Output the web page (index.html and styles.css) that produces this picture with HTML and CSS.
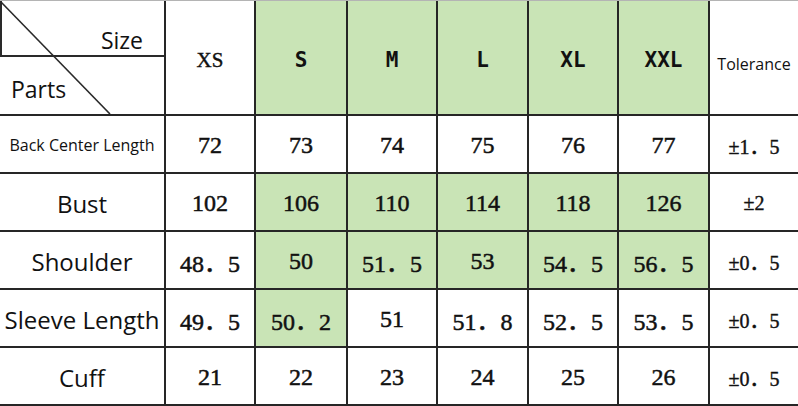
FILE: index.html
```html
<!DOCTYPE html>
<html>
<head>
<meta charset="utf-8">
<link rel="stylesheet" href="styles.css">
</head>
<body>
<div class="sheet">
  <div class="cell corner">
    <svg class="diag" width="164" height="113" viewBox="0 0 164 113"><line x1="1" y1="1" x2="110" y2="113" stroke="#2a2a2a" stroke-width="1.6"/></svg>
    <div class="corner-top"><span class="lbl-size">Size</span></div>
    <div class="corner-bot"><span class="lbl-parts">Parts</span></div>
  </div>
  <div class="cell hd-serif">XS</div>
  <div class="cell hd green">S</div>
  <div class="cell hd green">M</div>
  <div class="cell hd green">L</div>
  <div class="cell hd green">XL</div>
  <div class="cell hd green">XXL</div>
  <div class="cell tol-hd">Tolerance</div>

  <div class="cell part small">Back Center Length</div>
  <div class="cell num">72</div>
  <div class="cell num">73</div>
  <div class="cell num">74</div>
  <div class="cell num">75</div>
  <div class="cell num">76</div>
  <div class="cell num">77</div>
  <div class="cell tol">±1．5</div>

  <div class="cell part">Bust</div>
  <div class="cell num">102</div>
  <div class="cell num green">106</div>
  <div class="cell num green">110</div>
  <div class="cell num green">114</div>
  <div class="cell num green">118</div>
  <div class="cell num green">126</div>
  <div class="cell tol">±2</div>

  <div class="cell part">Shoulder</div>
  <div class="cell num">48．5</div>
  <div class="cell num green">50</div>
  <div class="cell num green">51．5</div>
  <div class="cell num green">53</div>
  <div class="cell num green">54．5</div>
  <div class="cell num green">56．5</div>
  <div class="cell tol">±0．5</div>

  <div class="cell part">Sleeve Length</div>
  <div class="cell num">49．5</div>
  <div class="cell num green">50．2</div>
  <div class="cell num">51</div>
  <div class="cell num">51．8</div>
  <div class="cell num">52．5</div>
  <div class="cell num">53．5</div>
  <div class="cell tol">±0．5</div>

  <div class="cell part">Cuff</div>
  <div class="cell num">21</div>
  <div class="cell num">22</div>
  <div class="cell num">23</div>
  <div class="cell num">24</div>
  <div class="cell num">25</div>
  <div class="cell num">26</div>
  <div class="cell tol">±0．5</div>
</div>
</body>
</html>
```

FILE: styles.css
```css
html, body {
  margin: 0;
  padding: 0;
  background: #ffffff;
}

.sheet {
  width: 798px;
  display: grid;
  grid-template-columns: 164px 88px 90px 88px 89px 88px 89px 88px;
  grid-template-rows: 113px 56px 56px 56px 56px 56px;
  gap: 2px;
  background: #262626;
  border-top: 1px solid #b4b4b4;
  border-bottom: 2px solid #262626;
}

.cell {
  background: #ffffff;
  display: flex;
  align-items: center;
  justify-content: center;
  color: #111111;
  white-space: nowrap;
}

.green {
  background: #c9e4b6;
}

.corner {
  position: relative;
  display: flex;
  flex-direction: column;
  align-items: stretch;
  justify-content: flex-start;
  font-family: "Open Sans", "Noto Sans", sans-serif;
  font-size: 23px;
}

.corner-top {
  height: 56px;
  border-bottom: 2px solid #2a2a2a;
  display: flex;
  align-items: flex-end;
  justify-content: flex-end;
  padding-right: 21px;
  box-sizing: border-box;
  border-left: 2px solid #2a2a2a;
}

.corner-bot {
  flex: 1;
  display: flex;
  align-items: center;
  padding-left: 11px;
}

.lbl-size {
  line-height: 1;
  margin-bottom: 3px;
}

.lbl-parts {
  line-height: 1;
  margin-top: 8px;
}

.diag {
  position: absolute;
  left: 0;
  top: 0;
}

.hd-serif {
  font-family: "Liberation Serif", serif;
  font-size: 21px;
  -webkit-text-stroke: 0.4px #111111;
  padding-top: 5px;
}

.hd {
  font-family: "DejaVu Sans Mono", monospace;
  font-weight: bold;
  font-size: 21px;
  padding-top: 4px;
}

.tol-hd {
  font-family: "Open Sans", "Noto Sans", sans-serif;
  font-size: 16px;
  padding-top: 12px;
}

.part {
  font-family: "Open Sans", "Noto Sans", sans-serif;
  font-size: 24px;
  padding-top: 2px;
}

.part.small {
  font-size: 16px;
}

.num {
  font-family: "Liberation Serif", "Noto Sans CJK SC", serif;
  font-size: 24px;
  -webkit-text-stroke: 0.5px #111111;
  padding-top: 3px;
}

.tol {
  font-family: "Liberation Serif", "Noto Sans CJK SC", serif;
  font-size: 20px;
  -webkit-text-stroke: 0.4px #111111;
  padding-top: 2px;
}
```
